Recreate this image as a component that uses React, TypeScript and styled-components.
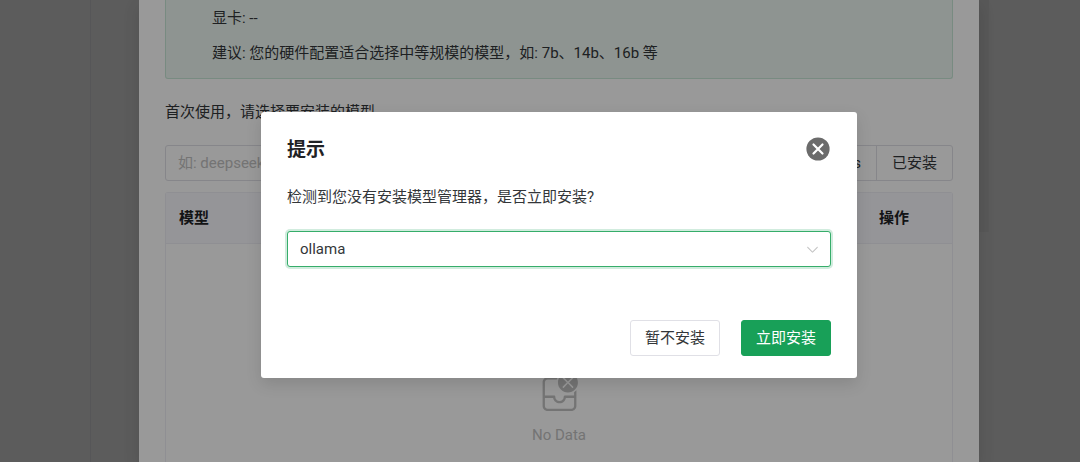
import React, { useState } from "react";
import styled, { createGlobalStyle } from "styled-components";

const GlobalStyle = createGlobalStyle`
  *, *::before, *::after { box-sizing: border-box; }
  body {
    margin: 0;
    background: #fff;
    color: #333639;
    font: 15px/24px Roboto, "Noto Sans CJK SC", sans-serif;
  }
  button, input, select { font: inherit; color: inherit; margin: 0; }
  h2, p { margin: 0; }
`;

const Page = styled.div`
  position: relative;
  display: flex;
  min-height: 100vh;
  overflow: hidden;
`;

const Sidebar = styled.aside`
  width: 91px;
  border-right: 1px solid #efeff5;
`;

const Content = styled.main`
  flex: 1;
`;

const Rail = styled.div`
  width: 10px;
  height: 232px;
  margin-right: 91px;
  background: #f6f6f6;
`;

const Mask = styled.div<{ $fill?: boolean }>`
  position: absolute;
  inset: 0;
  display: flex;
  justify-content: center;
  align-items: ${(p) => (p.$fill ? "stretch" : "flex-start")};
  padding-left: 38px;
  background: rgba(0, 0, 0, 0.4);
`;

const Panel = styled.section`
  display: flex;
  flex-direction: column;
  width: 840px;
  max-width: 100%;
  padding: 0 26px;
  background: #fff;
  box-shadow: 0 6px 16px rgba(0, 0, 0, 0.12);
`;

const HardwareInfo = styled.div`
  padding: 1px 46px 7px;
  border: 1px solid #c9e8d7;
  border-top: 0;
  border-radius: 0 0 3px 3px;
  background: #edf7f2;
  line-height: 35px;
`;

const Hint = styled.p`
  margin: 21px 0;
`;

const SearchGroup = styled.div`
  display: flex;
  height: 36px;
  margin-bottom: 11px;
  border: 1px solid #e0e0e6;
  border-radius: 3px;
`;

const SearchInput = styled.input`
  flex: 1;
  min-width: 0;
  padding: 0 12px;
  border: 0;
  background: none;
  outline: none;
  &::placeholder { color: #c2c2c2; opacity: 1; }
`;

const GroupButton = styled.button`
  padding: 0 15px;
  border: 0;
  border-left: 1px solid #e0e0e6;
  background: none;
`;

const TableFrame = styled.div`
  flex: 1;
  border: 1px solid #efeff5;
  border-bottom: 0;
  border-radius: 3px 3px 0 0;
`;

const ModelTable = styled.table`
  width: 100%;
  border-collapse: separate;
  border-spacing: 0;
  table-layout: fixed;
`;

const HeadCell = styled.th<{ $narrow?: boolean }>`
  width: ${(p) => (p.$narrow ? "86px" : "auto")};
  height: 51px;
  padding: 0 13px;
  border-bottom: 1px solid #efeff5;
  background: #f9f9fd;
  color: #1f2225;
  font-weight: 700;
  text-align: left;
`;

const EmptyCell = styled.td`
  padding: 127px 0 0;
  color: #c2c2c2;
  text-align: center;
`;

const EmptyIcon = styled.svg`
  display: block;
  width: 43px;
  height: 43px;
  margin: 0 auto 9px;
  fill: currentColor;
`;

const Dialog = styled.form`
  width: 596px;
  max-width: 100%;
  margin-top: 112px;
  padding: 25px 26px 22px;
  border-radius: 3px;
  background: #fff;
  box-shadow: 0 6px 16px rgba(0, 0, 0, 0.12);
`;

const DialogHeader = styled.header`
  display: flex;
  align-items: flex-start;
  justify-content: space-between;
  margin-bottom: 22px;
`;

const DialogTitle = styled.h2`
  color: #1f2225;
  font-size: 19px;
  font-weight: 700;
  line-height: 26px;
`;

const CloseButton = styled.button`
  display: block;
  width: 26px;
  height: 24px;
  padding: 0 1px;
  border: 0;
  background: none;
  svg { display: block; width: 24px; height: 24px; }
`;

const Question = styled.label`
  display: block;
  margin-bottom: 22px;
`;

const SelectBox = styled.div`
  display: grid;
  align-items: center;
  margin-bottom: 53px;
  svg {
    grid-area: 1 / 1;
    justify-self: end;
    width: 17px;
    height: 17px;
    margin-right: 10px;
    fill: #c2c2c2;
    pointer-events: none;
  }
`;

const Select = styled.select`
  grid-area: 1 / 1;
  width: 100%;
  height: 36px;
  padding: 0 12px;
  appearance: none;
  border: 1px solid #36ad6a;
  border-radius: 3px;
  outline: none;
  background: #fff;
  box-shadow: 0 0 0 2px rgba(24, 160, 88, 0.2);
`;

const Actions = styled.footer`
  display: flex;
  justify-content: flex-end;
  gap: 21px;
`;

const ActionButton = styled.button<{ $primary?: boolean }>`
  height: 36px;
  padding: 0 14px;
  border: 1px solid ${(p) => (p.$primary ? "#18a058" : "#e0e0e6")};
  border-radius: 3px;
  background: ${(p) => (p.$primary ? "#18a058" : "#fff")};
  color: ${(p) => (p.$primary ? "#fff" : "#333639")};
`;

export default function App() {
  const [manager, setManager] = useState("ollama");
  return (
    <>
      <GlobalStyle />
      <Page>
        <Sidebar />
        <Content />
        <Rail />
        <Mask $fill>
          <Panel>
            <HardwareInfo>
              <p>显卡: --</p>
              <p>建议: 您的硬件配置适合选择中等规模的模型，如: 7b、14b、16b 等</p>
            </HardwareInfo>
            <Hint>首次使用，请选择要安装的模型</Hint>
            <SearchGroup>
              <SearchInput aria-label="模型" placeholder="如: deepseek" />
              <GroupButton type="button">Models</GroupButton>
              <GroupButton type="button">已安装</GroupButton>
            </SearchGroup>
            <TableFrame>
              <ModelTable>
                <thead>
                  <tr>
                    <HeadCell>模型</HeadCell>
                    <HeadCell $narrow>操作</HeadCell>
                  </tr>
                </thead>
                <tbody>
                  <tr>
                    <EmptyCell colSpan={2}>
                      <EmptyIcon viewBox="0 0 28 28" aria-hidden="true">
                        <path d="M26 7.5C26 11.0899 23.0899 14 19.5 14C15.9101 14 13 11.0899 13 7.5C13 3.91015 15.9101 1 19.5 1C23.0899 1 26 3.91015 26 7.5ZM16.8536 4.14645C16.6583 3.95118 16.3417 3.95118 16.1464 4.14645C15.9512 4.34171 15.9512 4.65829 16.1464 4.85355L18.7929 7.5L16.1464 10.1464C15.9512 10.3417 15.9512 10.6583 16.1464 10.8536C16.3417 11.0488 16.6583 11.0488 16.8536 10.8536L19.5 8.20711L22.1464 10.8536C22.3417 11.0488 22.6583 11.0488 22.8536 10.8536C23.0488 10.6583 23.0488 10.3417 22.8536 10.1464L20.2071 7.5L22.8536 4.85355C23.0488 4.65829 23.0488 4.34171 22.8536 4.14645C22.6583 3.95118 22.3417 3.95118 22.1464 4.14645L19.5 6.79289L16.8536 4.14645Z" />
                        <path d="M25 22.75V12.5991C24.5572 13.0765 24.053 13.4961 23.5 13.8454V16H17.5L17.3982 16.0068C17.0322 16.0565 16.75 16.3703 16.75 16.75C16.75 18.2688 15.5188 19.5 14 19.5C12.4812 19.5 11.25 18.2688 11.25 16.75L11.2432 16.6482C11.1935 16.2822 10.8797 16 10.5 16H4.5V7.25C4.5 6.2835 5.2835 5.5 6.25 5.5H12.2696C12.4146 4.97463 12.6153 4.47237 12.865 4H6.25C4.45507 4 3 5.45507 3 7.25V22.75C3 24.5449 4.45507 26 6.25 26H21.75C23.5449 26 25 24.5449 25 22.75ZM4.5 22.75V17.5H9.81597L9.85751 17.7041C10.2905 19.5919 11.9808 21 14 21L14.215 20.9947C16.2095 20.8953 17.842 19.4209 18.184 17.5H23.5V22.75C23.5 23.7165 22.7165 24.5 21.75 24.5H6.25C5.2835 24.5 4.5 23.7165 4.5 22.75Z" />
                      </EmptyIcon>
                      No Data
                    </EmptyCell>
                  </tr>
                </tbody>
              </ModelTable>
            </TableFrame>
          </Panel>
        </Mask>
        <Mask>
          <Dialog role="dialog" aria-labelledby="dialog-title" onSubmit={(e) => e.preventDefault()}>
            <DialogHeader>
              <DialogTitle id="dialog-title">提示</DialogTitle>
              <CloseButton type="button" aria-label="关闭">
                <svg viewBox="0 0 24 24">
                  <circle cx="12" cy="12" r="11.6" fill="#6b6b6b" />
                  <path d="M7.5 7.5l9 9M16.5 7.5l-9 9" fill="none" stroke="#fff" strokeWidth="2.2" strokeLinecap="round" />
                </svg>
              </CloseButton>
            </DialogHeader>
            <Question htmlFor="manager">检测到您没有安装模型管理器，是否立即安装?</Question>
            <SelectBox>
              <Select id="manager" value={manager} onChange={(e) => setManager(e.target.value)}>
                <option value="ollama">ollama</option>
              </Select>
              <svg viewBox="0 0 16 16" aria-hidden="true">
                <path d="M3.14645 5.64645C3.34171 5.45118 3.65829 5.45118 3.85355 5.64645L8 9.79289L12.1464 5.64645C12.3417 5.45118 12.6583 5.45118 12.8536 5.64645C13.0488 5.84171 13.0488 6.15829 12.8536 6.35355L8.35355 10.8536C8.15829 11.0488 7.84171 11.0488 7.64645 10.8536L3.14645 6.35355C2.95118 6.15829 2.95118 5.84171 3.14645 5.64645Z" />
              </svg>
            </SelectBox>
            <Actions>
              <ActionButton type="button">暂不安装</ActionButton>
              <ActionButton type="submit" $primary>立即安装</ActionButton>
            </Actions>
          </Dialog>
        </Mask>
      </Page>
    </>
  );
}
